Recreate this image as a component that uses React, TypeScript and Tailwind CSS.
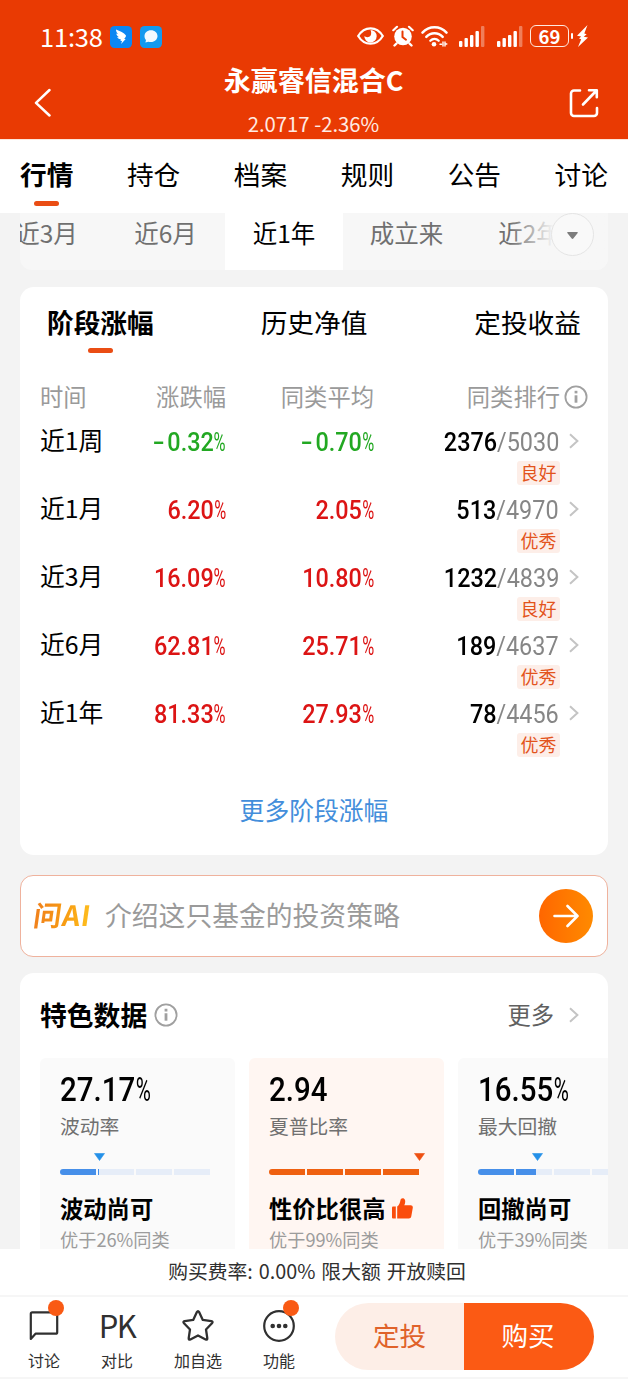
import React from "react";

const navTabs = ["行情", "持仓", "档案", "规则", "公告", "讨论"];

const rows = [
  { label: "近1周", change: "-0.32", avg: "-0.70", rank: "2376", total: "5030", tag: "良好" },
  { label: "近1月", change: "6.20", avg: "2.05", rank: "513", total: "4970", tag: "优秀" },
  { label: "近3月", change: "16.09", avg: "10.80", rank: "1232", total: "4839", tag: "良好" },
  { label: "近6月", change: "62.81", avg: "25.71", rank: "189", total: "4637", tag: "优秀" },
  { label: "近1年", change: "81.33", avg: "27.93", rank: "78", total: "4456", tag: "优秀" },
];

const features = [
  { value: "27.17", percent: true, name: "波动率", verdict: "波动尚可", beat: "优于26%同类", level: 26, hot: false },
  { value: "2.94", percent: false, name: "夏普比率", verdict: "性价比很高", beat: "优于99%同类", level: 100, hot: true },
  { value: "16.55", percent: true, name: "最大回撤", verdict: "回撤尚可", beat: "优于39%同类", level: 39, hot: false },
];

const InfoIcon = () => (
  <svg className="h-[24px] w-[24px] shrink-0" viewBox="0 0 24 24" fill="none" stroke="#a0a0a0">
    <circle cx="12" cy="12" r="10.6" strokeWidth="1.8" />
    <path d="M12 10.3v7.4" strokeWidth="2.8" />
    <path d="M12 5.8v2.6" strokeWidth="2.8" />
  </svg>
);

const Chevron = () => (
  <svg className="h-[16px] w-[10px] shrink-0" viewBox="0 0 10 16" fill="none" stroke="#c4c4c4" strokeWidth="2">
    <path d="M1 1.2 8.4 8 1 14.8" />
  </svg>
);

const Percent = ({ value }: { value: string }) => {
  const color = value.startsWith("-") ? "text-[#22a822]" : "text-[#dc1414]";
  return (
    <div className={`flex origin-right scale-x-[0.9] justify-end pt-[2px] font-[Roboto,sans-serif] text-[26px] font-medium leading-[30px] ${color}`}>
      {value.startsWith("-") && <span className="mr-[3px] inline-block origin-right scale-x-[1.5]">-</span>}
      <span>{value.replace("-", "")}</span>
      <span className="w-[13.500px] origin-left scale-x-[0.7] font-normal">%</span>
    </div>
  );
};

const Signal = () => (
  <svg className="h-[21px] w-[26px]" viewBox="0 0 26 21" fill="#fff">
    <rect x="0" y="15" width="3.4" height="6" rx="1" />
    <rect x="5.5" y="12" width="3.4" height="9" rx="1" />
    <rect x="11" y="9" width="3.4" height="12" rx="1" />
    <rect x="16.5" y="5" width="3.4" height="16" rx="1" />
    <rect x="22" y="0" width="3.4" height="21" rx="1" opacity="0.35" />
  </svg>
);

const Header = () => (
  <header className="h-[139px] bg-[#e93a03] text-white">
    <div className="flex h-[60px] items-start pt-[22px] pl-[40px]">
      <span className="w-[70px] text-[25.500px] leading-[28px] tracking-[-0.2px]">11:38</span>
      <svg className="mt-[4px] h-[22px] w-[22px]" viewBox="0 0 22 22">
        <rect width="22" height="22" rx="4.5" fill="#0b87f3" />
        <path d="M6 3.5c4 1.3 8 3.6 9.8 5.7.4.6.1 1.2-.4 2.1l-1.2 1.8h1.5l-4.6 5 .9-3.2-1.7-.1.7-1.4C8.600 12.800 7.600 12 7.200 10.900l2 .4C7.400 10.200 6.400 9 6.300 7.500l2 .8C6.700 6.800 6 5.300 6 3.500Z" fill="#fff" />
      </svg>
      <svg className="mt-[4px] ml-[8px] h-[22px] w-[22px]" viewBox="0 0 22 22">
        <rect width="22" height="22" rx="4.5" fill="#139af0" />
        <path d="M11 4.200c3.800 0 6.500 2.500 6.500 5.900s-2.800 6-6.500 6c-.9 0-1.800-.1-2.600-.4l-3 .8.6-2.400C5 13 4.500 11.700 4.500 10.100 4.500 6.700 7.200 4.200 11 4.200Z" fill="#f2faff" />
      </svg>
      <svg className="mt-[5px] ml-[195px] h-[18px] w-[27px]" viewBox="0 0 27 18">
        <path d="M1.200 9C4 4.300 8.500 1.300 13.500 1.300S23 4.300 25.800 9C23 13.700 18.500 16.700 13.500 16.700S4 13.700 1.200 9Z" fill="none" stroke="#fff" strokeWidth="2.200" />
        <path d="M13.500 3A6.200 6.200 0 1 1 7.300 9c1.600 1.700 5.200 1.500 6.300-.5.900-1.700.700-3.900-.1-5.500Z" fill="#fff" />
      </svg>
      <svg className="mt-[3px] ml-[8px] h-[22px] w-[22px]" viewBox="0 0 22 22" fill="none" stroke="#fff" strokeLinecap="round">
        <circle cx="11" cy="11.500" r="8.800" fill="#fff" stroke="none" />
        <path d="M1.300 5.200 5 1.800M20.700 5.200 17 1.800" strokeWidth="2.200" />
        <path d="m4.500 18.500-2 2M17.500 18.500l2 2" strokeWidth="2.400" />
        <path d="M10.500 6.500v5.500l3.500 2.700" stroke="#e93a03" strokeWidth="2" />
      </svg>
      <svg className="mt-[4px] ml-[7px] h-[21px] w-[27px]" viewBox="0 0 27 21" fill="none" stroke="#fff" strokeLinecap="round">
        <path d="M1.500 6.600C8-.5 19-.5 25.500 6.600" strokeWidth="2.500" />
        <path d="M5.300 10.800c4.700-4.900 11.700-4.900 16.400 0" strokeWidth="2.500" />
        <path d="M9.300 14.800c2.500-2.500 5.900-2.500 8.400 0" strokeWidth="2.300" />
        <circle cx="13" cy="18.300" r="2.300" fill="#fff" stroke="none" />
        <path d="M19 18.200h1.500m1.500-2.300v4.200m2-4.200v4.200m0-2.100h1.800" strokeWidth="1.400" />
      </svg>
      <div className="mt-[4px] ml-[11px] flex gap-[12px]">
        <Signal />
        <Signal />
      </div>
      <div className="mt-[3px] ml-[7px] flex h-[22px] w-[39px] items-center justify-center rounded-[6px] border-[1.5px] border-[#ffe9e0] text-[18.500px] font-bold leading-[20px]">
        <span className="-mt-px">69</span>
      </div>
      <svg className="mt-[3px] ml-[2px] h-[22px] w-[18px]" viewBox="0 0 18 22" fill="#fff">
        <rect x="0" y="8" width="2" height="6" rx="1" />
        <path d="M16.500 0 6 10.800l4.200.7L8 13.500l2.200.8L7 22l10-9.400-4.300-.9 3-2.400-2.400-.8Z" />
      </svg>
    </div>
    <div className="flex h-[79px] justify-between pr-[29px] pl-[34px]">
      <svg className="mt-[28px] mr-[6px] h-[29px] w-[18px]" viewBox="0 0 18 29" fill="none" stroke="#fff" strokeWidth="2.500" strokeLinecap="round" strokeLinejoin="round">
        <path d="M15.500 2 2 14.800 15.500 27.500" />
      </svg>
      <div className="flex flex-col items-center">
        <h1 className="mt-[2px] text-[27px] font-bold leading-[36px]">永赢睿信混合C</h1>
        <p className="mt-[11px] text-[20.300px] leading-[28px] text-[#ffeae2]">2.0717 -2.36%</p>
      </div>
      <svg className="mt-[28px] h-[30px] w-[30px]" viewBox="0 0 30 30" fill="none" stroke="#fff" strokeWidth="2.600" strokeLinecap="round" strokeLinejoin="round">
        <path d="M11 2.500H5a3 3 0 0 0-3 3V25a3 3 0 0 0 3 3h20a3 3 0 0 0 3-3v-5" />
        <path d="M14 16.500 27.500 2.500M20 2.300h7.800v7" />
      </svg>
    </div>
  </header>
);

const PeriodBar = () => (
  <div className="relative mx-[20px] h-[57px] overflow-hidden rounded-b-[12px] bg-[#f7f7f7]">
    <div className="-ml-[33px] flex h-[57px] w-[640px] text-center text-[24.500px] leading-[40px] text-[#707070]">
      <span className="w-[119px] shrink-0">近3月</span>
      <span className="w-[119px] shrink-0">近6月</span>
      <span className="w-[118px] shrink-0 bg-white text-black">近1年</span>
      <span className="w-[127px] shrink-0">成立来</span>
      <span className="w-[119px] shrink-0">近2年</span>
    </div>
    <div className="absolute top-0 right-0 flex h-[57px] w-[98px] bg-linear-to-r from-[#f7f7f7]/0 via-[#f7f7f7] via-45% to-[#f7f7f7]">
      <div className="ml-[41px] flex h-[43px] w-[43px] items-center justify-center rounded-full border border-[#e4e4e4] bg-[#f9f9f9]">
        <svg className="mt-px h-[7px] w-[11px]" viewBox="0 0 11 7" fill="#7d7d7d">
          <path d="M1 0h9c.8 0 1 .7.500 1.200L6.300 6.500c-.5.500-1.100.5-1.600 0L.5 1.200C0 .7.200 0 1 0Z" />
        </svg>
      </div>
    </div>
  </div>
);

const StageCard = () => (
  <section className="mx-[20px] mt-[17px] h-[568px] rounded-[14px] bg-white">
    <div className="flex h-[88px] justify-between px-[27px] pt-[17px] text-[26.700px] leading-[36px]">
      <div className="flex flex-col items-center">
        <span className="font-bold">阶段涨幅</span>
        <i className="mt-[8px] h-[5px] w-[25px] rounded-full bg-[#ea4d14]" />
      </div>
      <span>历史净值</span>
      <span>定投收益</span>
    </div>
    <div className="grid h-[50px] grid-cols-[206px_148px_1fr] pr-[20px] text-[23.300px] leading-[42px] text-[#9a9a9a]">
      <div className="flex justify-between pl-[20px]">
        <span>时间</span>
        <span>涨跌幅</span>
      </div>
      <span className="text-right">同类平均</span>
      <div className="flex items-start justify-end gap-[4px]">
        <span>同类排行</span>
        <span className="mt-[10px]"><InfoIcon /></span>
      </div>
    </div>
    {rows.map((row) => (
      <div key={row.label} className="grid h-[68.100px] grid-cols-[206px_148px_185px_1fr]">
        <div className="flex justify-between pl-[20px] text-[24.800px] leading-[28px]">
          <span>{row.label}</span>
          <Percent value={row.change} />
        </div>
        <Percent value={row.avg} />
        <div className="flex flex-col items-end">
          <div className="origin-right scale-x-[0.9] pt-[2px] font-[Roboto,sans-serif] text-[26px] leading-[30px]">
            <span className="font-medium">{row.rank}</span>
            <span className="text-[#868686]">/{row.total}</span>
          </div>
          <span className="mt-[4px] -mr-px h-[24px] w-[43px] rounded-[3px] bg-[#fdeee8] text-center text-[18px] leading-[22px] text-[#e3541c]">
            {row.tag}
          </span>
        </div>
        <div className="pt-[8px] pl-[10px]">
          <Chevron />
        </div>
      </div>
    ))}
    <div className="pt-[26px] text-center text-[24.800px] leading-[36px] text-[#438edb]">更多阶段涨幅</div>
  </section>
);

const AskAi = () => (
  <section className="mx-[20px] mt-[20px] flex h-[82px] items-center rounded-[13px] border border-[#efb29d] bg-white pr-[14px] pl-[13px]">
    <span className="-mt-[4px] mr-[11px] w-[60px] -skew-x-8 bg-linear-to-r from-[#f0801c] via-[#f79a12] to-[#ffc31f] bg-clip-text text-[28px] font-bold leading-[36px] tracking-[0.800px] text-transparent">
      问AI
    </span>
    <span className="-mt-[3px] flex-1 text-[26.800px] leading-[36px] text-[#9a9a9a]">介绍这只基金的投资策略</span>
    <span className="-mt-px flex h-[54px] w-[54px] items-center justify-center rounded-full bg-linear-to-r from-[#ff6600] to-[#ff8a00]">
      <svg className="h-[24px] w-[26px]" viewBox="0 0 26 24" fill="none" stroke="#fff" strokeWidth="2.600" strokeLinecap="round" strokeLinejoin="round">
        <path d="M1.500 12h23M14.500 2l10 10-10 10" />
      </svg>
    </span>
  </section>
);

const Gauge = ({ level, hot }: { level: number; hot: boolean }) => (
  <div className="mt-[13px] w-[150px]">
    <svg className="relative h-[8px] w-[12px] -translate-x-[5.500px]" style={{ left: `${level}%` }} viewBox="0 0 12 8" fill={hot ? "#ee5012" : "#2490e8"}>
      <path d="M1 .5h10L6 7.500Z" stroke={hot ? "#ee5012" : "#2490e8"} strokeWidth="0.600" />
    </svg>
    <div className="mt-[8px] flex h-[6px] gap-[1.500px] overflow-hidden rounded-l-full rounded-r-[2px]">
      {[0, 25, 50, 75].map((start) => (
        <div key={start} className="flex-1 bg-[#e6edf8]">
          <div
            className={hot ? "h-full bg-[#ef6010]" : "h-full bg-[#468fe9]"}
            style={{ width: `${Math.max(0, Math.min(100, (level - start) * 4))}%` }}
          />
        </div>
      ))}
    </div>
  </div>
);

const FeatureCard = () => (
  <section className="mx-[20px] mt-[16px] h-[276px] overflow-hidden rounded-t-[14px] bg-white">
    <div className="flex h-[85px] items-center pr-[29px] pb-[2px] pl-[20px]">
      <h2 className="text-[26.800px] font-bold leading-[36px]">特色数据</h2>
      <span className="ml-[7px] flex-1"><InfoIcon /></span>
      <span className="-mt-px mr-[15px] text-[23.300px] leading-[36px] text-[#606060]">更多</span>
      <Chevron />
    </div>
    <div className="flex gap-[14px] pl-[20px]">
      {features.map((item) => (
        <div key={item.name} className={`h-[191px] w-[195px] shrink-0 rounded-t-[6px] pt-[12px] pl-[20px] ${item.hot ? "bg-[#fff6f2]" : "bg-[#fafafa]"}`}>
          <div className="flex origin-left scale-x-[0.88] font-[Roboto,sans-serif] text-[33.500px] font-medium leading-[40px]">
            {item.value}
            {item.percent && <span className="ml-px w-[18px] origin-left scale-x-[0.700] font-normal">%</span>}
          </div>
          <div className="mt-[2px] text-[19.800px] leading-[28px] text-[#707070]">{item.name}</div>
          <Gauge level={item.level} hot={item.hot} />
          <div className="mt-[16px] flex items-center text-[23.300px] font-bold leading-[34px]">
            {item.verdict}
            {item.hot && (
              <svg className="ml-[7px] h-[21px] w-[21px]" viewBox="0 0 21 21" fill="#fa4c0c">
                <path d="M0 9.500Q0 8.500 1 8.500h2.800v12H1q-1 0-1-1Z" />
                <path d="M5.200 8.500C7 7.500 8 5 8.400 2.500c.2-2.800 3.800-3.300 4.600-.4.500 1.900.1 3.500-.7 5.200h6.300c1.500 0 2.400 1 2.200 2.500l-1.500 8.500c-.3 1.500-1.100 2.200-2.500 2.200H5.200Z" />
              </svg>
            )}
          </div>
          <div className="mt-px text-[18.200px] leading-[26px] text-[#9c9c9c]">{item.beat}</div>
        </div>
      ))}
    </div>
  </section>
);

const Action = ({ label, className, dot, children }: { label: string; className: string; dot?: boolean; children: React.ReactNode }) => (
  <div className={`flex flex-col items-center ${className}`}>
    <div className="relative flex h-[32px] w-[32px] items-center justify-center">
      {children}
      {dot && <i className="absolute -top-[10px] -right-[4px] h-[16px] w-[16px] rounded-full bg-[#f95a14]" />}
    </div>
    <span className="mt-[7px] text-[16px] leading-[22px] whitespace-nowrap">{label}</span>
  </div>
);

const BottomBar = () => (
  <footer className="h-[131px] bg-white text-[#303030]">
    <div className="h-[46px] pl-[6px] text-center text-[19.800px] leading-[44px] [word-spacing:1.5px]">购买费率: 0.00% 限大额 开放赎回</div>
    <div className="flex h-[84px] border-y-2 border-[#f6f6f6]">
      <Action label="讨论" className="ml-[8px] w-[72px] pt-[13px]" dot>
        <svg className="h-[32px] w-[30px]" viewBox="0 0 30 32" fill="none" stroke="#303030" strokeWidth="2.200" strokeLinejoin="round">
          <path d="M1.800 3.800q0-1.500 1.500-1.500h23.400q1.500 0 1.500 1.500v18.400q0 1.500-1.500 1.500H6.500l-4.700 5.200Z" />
        </svg>
      </Action>
      <Action label="对比" className="w-[74px] pt-[13px]">
        <span className="-mt-[3px] text-[31px] leading-[32px] tracking-[-1.500px]">PK</span>
      </Action>
      <Action label="加自选" className="w-[88px] pt-[13px]">
        <svg className="h-[34px] w-[34px] shrink-0" viewBox="0 0 34 34" fill="none" stroke="#303030" strokeWidth="2.300" strokeLinejoin="round">
          <path d="M15.900 3.100q1.100-1.900 2.200 0l3.700 7.800 8.500 1.300q2.100.5.700 2.100l-6 6.200 1.300 8.700q.2 2-1.700 1.200L17 26.400l-7.600 4q-1.900.8-1.700-1.200L9 20.500l-6-6.200q-1.400-1.600.7-2.100l8.500-1.300Z" />
        </svg>
      </Action>
      <Action label="功能" className="w-[74px] pt-[13px]" dot>
        <svg className="h-[32px] w-[32px]" viewBox="0 0 32 32" fill="#303030">
          <circle cx="16" cy="16" r="14.800" fill="none" stroke="#303030" strokeWidth="2.200" />
          <circle cx="9.700" cy="16" r="2.300" />
          <circle cx="16" cy="16" r="2.300" />
          <circle cx="22.300" cy="16" r="2.300" />
        </svg>
      </Action>
      <div className="mt-[6px] ml-[19px] flex h-[67px] w-[259px] overflow-hidden rounded-full text-center text-[26.600px] leading-[64px]">
        <span className="w-[129px] bg-[#fdeee7] text-[#e0622a]">定投</span>
        <span className="flex-1 bg-[#fb5a14] pr-[2px] text-white">购买</span>
      </div>
    </div>
  </footer>
);

export default function App() {
  return (
    <div className="h-[1380px] w-[628px] overflow-hidden bg-[#f3f3f3] font-['Noto_Sans_CJK_SC',sans-serif] text-black">
      <Header />
      <nav className="flex h-[74px] justify-between border-t border-[#fde5da] bg-white px-[20px] pt-[16px] text-[26.700px] leading-[36px]">
        {navTabs.map((tab, i) => (
          <div key={tab} className="flex flex-col items-center">
            <span className={i === 0 ? "font-bold" : ""}>{tab}</span>
            {i === 0 && <i className="mt-[9px] h-[5px] w-[25px] rounded-full bg-[#ea4d14]" />}
          </div>
        ))}
      </nav>
      <PeriodBar />
      <StageCard />
      <AskAi />
      <FeatureCard />
      <BottomBar />
    </div>
  );
}
